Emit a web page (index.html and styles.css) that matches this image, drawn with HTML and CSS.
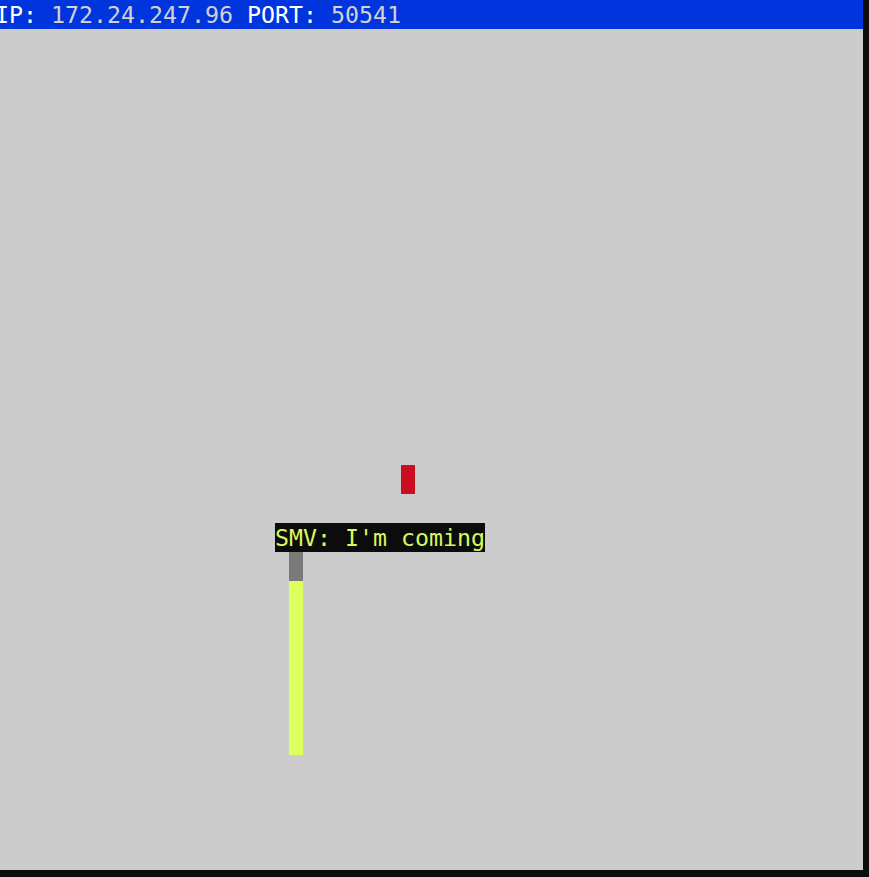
FILE: index.html
```html
<!DOCTYPE html>
<html>
<head>
<meta charset="utf-8">
<link rel="stylesheet" href="styles.css">
</head>
<body>
<div class="screen">
  <div class="topbar"><span class="key">IP:</span> <span class="val">172.24.247.96</span> <span class="key">PORT:</span> <span class="val">50541</span></div>
  <div class="field">
    <div class="enemy"></div>
    <div class="player">
      <div class="tag">SMV: I'm coming</div>
      <div class="body">
        <div class="hp-lost"></div>
        <div class="hp"></div>
      </div>
    </div>
  </div>
</div>
</body>
</html>
```
FILE: styles.css
```css
html, body {
  margin: 0;
  padding: 0;
  background: #0c0c0c;
  width: 869px;
  height: 877px;
  overflow: hidden;
}
.screen {
  width: 863px;
  height: 870px;
  background: #cccccc;
  display: flex;
  flex-direction: column;
  font-family: "DejaVu Sans Mono", monospace;
  font-size: 23.25px;
}
.topbar {
  height: 29px;
  line-height: 29px;
  background: #0034dd;
  white-space: pre;
  text-indent: -5px;
  overflow: hidden;
}
.key { color: #ffffff; }
.val { color: #d2d2d2; }
.field {
  position: relative;
  flex: 1;
}
.enemy {
  position: absolute;
  left: 401px;
  top: 436px;
  width: 14px;
  height: 29px;
  background: #c80e1f;
}
.player {
  position: absolute;
  left: 275px;
  top: 494px;
  display: flex;
  flex-direction: column;
}
.tag {
  background: #0c0c0c;
  color: #d8f85c;
  height: 29px;
  line-height: 29px;
  white-space: pre;
}
.body {
  margin-left: 14px;
  width: 14px;
  display: flex;
  flex-direction: column;
}
.hp-lost {
  height: 29px;
  background: #7a7a7a;
}
.hp {
  height: 174px;
  background: #dcff5e;
}
```
